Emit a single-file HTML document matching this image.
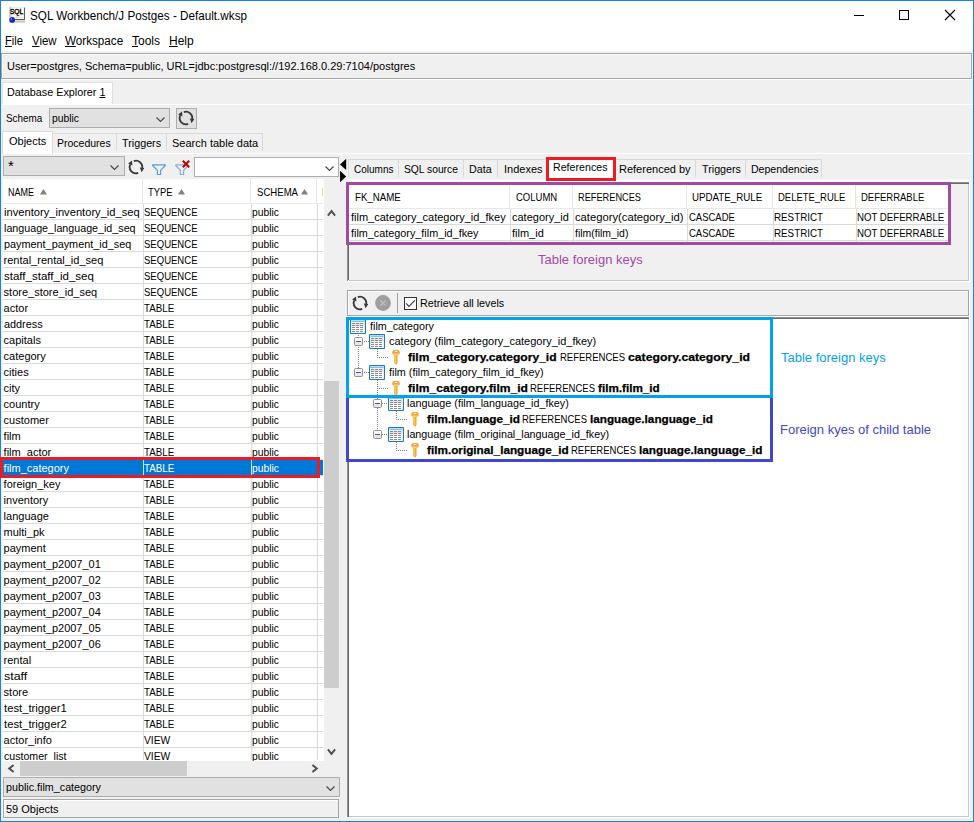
<!DOCTYPE html>
<html>
<head>
<meta charset="utf-8">
<title>SQL Workbench/J Postges - Default.wksp</title>
<style>
html,body{margin:0;padding:0;}
body{width:974px;height:822px;overflow:hidden;background:#f0f0f0;font-family:"Liberation Sans",sans-serif;font-size:11px;color:#000;position:relative;}
.a{position:absolute;}
.t{position:absolute;white-space:nowrap;font-size:11px;line-height:13px;}
.seg{font-size:12px;line-height:14px;position:absolute;white-space:nowrap;}
.ann{font-size:13px;line-height:15px;position:absolute;white-space:nowrap;}
u{text-decoration:underline;text-underline-offset:1px;}
.combo{position:absolute;box-sizing:border-box;border:1px solid #adadad;background:#e1e1e1;}
.tb{position:absolute;box-sizing:border-box;border-left:1px solid #d9d9d9;border-top:1px solid #d9d9d9;border-right:1px solid #d9d9d9;background:#f0f0f0;}
.row{position:absolute;left:0;width:320px;height:16px;border-bottom:1px solid #dadada;box-sizing:border-box;}
.row .t{top:1px;}
.sel{background:#0078d7;color:#fff;}
.vl{position:absolute;width:1px;background:#dadada;}
.hl{position:absolute;height:1px;background:#dadada;}
</style>
</head>
<body>
<div class="a" style="left:0px;top:0px;width:974px;height:822px;background:#1883d7;"></div>
<div class="a" style="left:1px;top:1px;width:972px;height:820px;background:#f0f0f0;"></div>
<div class="a" style="left:1px;top:1px;width:972px;height:50px;background:#fff;"></div>
<svg class="a" style="left:9px;top:7px" width="16" height="16" viewBox="0 0 16 16">
<rect x="0" y="0" width="16" height="16" fill="#d2d2d2"/>
<rect x="2.500" y="0.300" width="12.500" height="12" fill="#fbfbea"/>
<rect x="2.500" y="7.500" width="12.500" height="0.800" fill="#dcdccc"/>
<rect x="2.500" y="10" width="12.500" height="0.800" fill="#e4e4d4"/>
<rect x="7.300" y="7.500" width="0.800" height="5" fill="#d8d8c8"/>
<rect x="15" y="0.800" width="1" height="12.200" fill="#625c5c"/>
<rect x="6" y="12" width="10" height="1" fill="#625c5c"/>
<text x="0.700" y="6.900" font-family="Liberation Sans, sans-serif" font-size="7.200" fill="#000" stroke="#000" stroke-width="0.350" textLength="13.600" lengthAdjust="spacingAndGlyphs">SQL</text>
<circle cx="3.200" cy="12.900" r="2.800" fill="#1428c4"/><circle cx="2.500" cy="12" r="0.900" fill="#5a78ff"/>
</svg>
<div class="seg" style="left:30px;top:9px;font-size:12px;line-height:14px;transform:scaleX(0.9741);transform-origin:0 0;">SQL Workbench/J Postges - Default.wksp</div>
<svg class="a" style="left:850px;top:8px" width="110" height="14" viewBox="0 0 110 14">
<rect x="4" y="7" width="10" height="1" fill="#000"/>
<rect x="49.500" y="2.500" width="9" height="9" fill="none" stroke="#000" stroke-width="1"/>
<path d="M95 2 L105 12 M105 2 L95 12" stroke="#000" stroke-width="1.100" fill="none"/>
</svg>
<div class="seg" style="left:5px;top:34px;font-size:12px;line-height:14px;transform:scaleX(0.9300);transform-origin:0 0;"><u>F</u>ile</div>
<div class="seg" style="left:32px;top:34px;font-size:12px;line-height:14px;transform:scaleX(0.9500);transform-origin:0 0;"><u>V</u>iew</div>
<div class="seg" style="left:65px;top:34px;font-size:12px;line-height:14px;transform:scaleX(0.9730);transform-origin:0 0;"><u>W</u>orkspace</div>
<div class="seg" style="left:132px;top:34px;font-size:12px;line-height:14px;"><u>T</u>ools</div>
<div class="seg" style="left:169px;top:34px;font-size:12px;line-height:14px;"><u>H</u>elp</div>
<div class="a" style="left:1px;top:53px;width:971px;height:26px;box-sizing:border-box;border:1px solid #a5a5a5;box-shadow:inset 1px 1px 0 #fff, 1px 1px 0 #fff;"></div>
<div class="t" style="left:7px;top:60px;">User=postgres, Schema=public, URL=jdbc:postgresql://192.168.0.29:7104/postgres</div>
<div class="a" style="left:2px;top:82px;width:111px;height:22px;background:#fff;box-sizing:border-box;border:1px solid #e0e0e0;border-bottom:none;"></div>
<div class="t" style="left:7px;top:86px;transform:scaleX(0.9812);transform-origin:0 0;">Database Explorer <u>1</u></div>
<div class="a" style="left:2px;top:104px;width:970px;height:1px;background:#fff;"></div>
<div class="t" style="left:6px;top:112px;transform:scaleX(0.8994);transform-origin:0 0;">Schema</div>
<div class="combo" style="left:49px;top:108px;width:121px;height:20px"></div>
<div class="t" style="left:52px;top:112px;transform:scaleX(0.9391);transform-origin:0 0;">public</div>
<svg class="a" style="left:156px;top:117px" width="9" height="5.5" viewBox="0 0 9 5.5"><path d="M0.5 0.5 L4.5 4.5 L8.5 0.5" fill="none" stroke="#444" stroke-width="1.1"/></svg>
<div class="combo" style="left:176px;top:108px;width:21px;height:21px"></div>
<svg class="a" style="left:178px;top:110px" width="16" height="16" viewBox="0 0 16 16">
<path d="M5.85 2.08 A6.3 6.3 0 0 1 14.2 9.09" fill="none" stroke="#3a3a3a" stroke-width="1.85"/>
<path d="M10.15 13.92 A6.3 6.3 0 0 1 2.29 5.34" fill="none" stroke="#3a3a3a" stroke-width="1.85"/>
<path d="M16.400 9 L11.900 8.500 L13.500 13.300 Z" fill="#3a3a3a"/>
<path d="M0.100 4.600 L4.400 6.500 L4 1.500 Z" fill="#3a3a3a"/>
</svg>
<div class="tb" style="left:52px;top:133px;width:65px;height:18px"></div>
<div class="tb" style="left:116px;top:133px;width:51px;height:18px"></div>
<div class="tb" style="left:166px;top:133px;width:97px;height:18px"></div>
<div class="a" style="left:2px;top:153px;width:970px;height:1px;background:#fff;"></div>
<div class="tb" style="left:2px;top:131px;width:51px;height:23px;background:#fff"></div>
<div class="t" style="left:9px;top:135px;">Objects</div>
<div class="t" style="left:57px;top:137px;transform:scaleX(0.9544);transform-origin:0 0;">Procedures</div>
<div class="t" style="left:122px;top:137px;transform:scaleX(0.9790);transform-origin:0 0;">Triggers</div>
<div class="t" style="left:172px;top:137px;">Search table data</div>
<div class="combo" style="left:3px;top:156px;width:122px;height:20px"></div>
<div class="t" style="left:8px;top:156.5px;font-size:15px;line-height:17px">*</div>
<svg class="a" style="left:110px;top:165px" width="9" height="5.5" viewBox="0 0 9 5.5"><path d="M0.5 0.5 L4.5 4.5 L8.5 0.5" fill="none" stroke="#444" stroke-width="1.1"/></svg>
<svg class="a" style="left:128px;top:159px" width="16" height="16" viewBox="0 0 16 16">
<path d="M5.85 2.08 A6.3 6.3 0 0 1 14.2 9.09" fill="none" stroke="#3a3a3a" stroke-width="1.85"/>
<path d="M10.15 13.92 A6.3 6.3 0 0 1 2.29 5.34" fill="none" stroke="#3a3a3a" stroke-width="1.85"/>
<path d="M16.400 9 L11.900 8.500 L13.500 13.300 Z" fill="#3a3a3a"/>
<path d="M0.100 4.600 L4.400 6.500 L4 1.500 Z" fill="#3a3a3a"/>
</svg>
<svg class="a" style="left:152px;top:164px;opacity:1" width="14" height="12" viewBox="0 0 14 12"><path d="M0.7 0.8 H13.3 V1.500 L8.600 6.400 V10.500 H5.400 V6.400 L0.7 1.500 Z" fill="none" stroke="#5b9bd5" stroke-width="1.2" stroke-linejoin="round"/></svg>
<svg class="a" style="left:175px;top:164px;opacity:0.75" width="14" height="12" viewBox="0 0 14 12"><path d="M0.7 0.8 H13.3 V1.500 L8.600 6.400 V10.500 H5.400 V6.400 L0.7 1.500 Z" fill="none" stroke="#5b9bd5" stroke-width="1.2" stroke-linejoin="round"/></svg>
<svg class="a" style="left:182px;top:160px" width="8" height="8" viewBox="0 0 8 8"><path d="M0.8 0.8 L7.2 7.2 M7.2 0.8 L0.8 7.2" stroke="#c00000" stroke-width="2"/></svg>
<div class="combo" style="left:194px;top:157px;width:145px;height:20px;background:#fff"></div>
<svg class="a" style="left:325px;top:166px" width="9" height="5.5" viewBox="0 0 9 5.5"><path d="M0.5 0.5 L4.5 4.5 L8.5 0.5" fill="none" stroke="#444" stroke-width="1.1"/></svg>
<div class="a" style="left:3px;top:179px;width:321px;height:582px;background:#fff;overflow:hidden">
<div class="t" style="left:5px;top:7px;transform:scaleX(0.8181);transform-origin:0 0;">NAME</div>
<svg class="a" style="left:36.5px;top:10px" width="7" height="6" viewBox="0 0 7 6"><path d="M0 5.5 L3.5 0 L7 5.5 Z" fill="#808080"/></svg>
<div class="t" style="left:145.3px;top:7px;transform:scaleX(0.8492);transform-origin:0 0;">TYPE</div>
<svg class="a" style="left:175px;top:10px" width="7" height="6" viewBox="0 0 7 6"><path d="M0 5.5 L3.5 0 L7 5.5 Z" fill="#808080"/></svg>
<div class="t" style="left:253.6px;top:7px;transform:scaleX(0.8712);transform-origin:0 0;">SCHEMA</div>
<svg class="a" style="left:298px;top:10px" width="7" height="6" viewBox="0 0 7 6"><path d="M0 5.5 L3.5 0 L7 5.5 Z" fill="#808080"/></svg>
<div class="a" style="left:319px;top:9px;width:1px;height:8px;background:#f8d690;"></div>
<div class="hl" style="left:0;top:24px;width:320px;background:#e8e8e8"></div>
<div class="vl" style="left:140px;top:25px;height:556px"></div>
<div class="vl" style="left:139px;top:0;height:24px;background:#e5e5e5"></div>
<div class="vl" style="left:248px;top:25px;height:556px"></div>
<div class="vl" style="left:247px;top:0;height:24px;background:#e5e5e5"></div>
<div class="vl" style="left:314px;top:25px;height:556px"></div>
<div class="vl" style="left:313px;top:0;height:24px;background:#e5e5e5"></div>
<div class="row" style="top:25px"><div class="t" style="left:0.6px;top:2px;transform:scaleX(1.0135);transform-origin:0 0;">inventory_inventory_id_seq</div><div class="t" style="left:141.3px;top:2px;transform:scaleX(0.8664);transform-origin:0 0;">SEQUENCE</div><div class="t" style="left:249px;top:2px;transform:scaleX(0.9391);transform-origin:0 0;">public</div></div>
<div class="row" style="top:41px"><div class="t" style="left:0.6px;top:2px;transform:scaleX(0.9730);transform-origin:0 0;">language_language_id_seq</div><div class="t" style="left:141.3px;top:2px;transform:scaleX(0.8664);transform-origin:0 0;">SEQUENCE</div><div class="t" style="left:249px;top:2px;transform:scaleX(0.9391);transform-origin:0 0;">public</div></div>
<div class="row" style="top:57px"><div class="t" style="left:0.6px;top:2px;transform:scaleX(0.9860);transform-origin:0 0;">payment_payment_id_seq</div><div class="t" style="left:141.3px;top:2px;transform:scaleX(0.8664);transform-origin:0 0;">SEQUENCE</div><div class="t" style="left:249px;top:2px;transform:scaleX(0.9391);transform-origin:0 0;">public</div></div>
<div class="row" style="top:73px"><div class="t" style="left:0.6px;top:2px;">rental_rental_id_seq</div><div class="t" style="left:141.3px;top:2px;transform:scaleX(0.8664);transform-origin:0 0;">SEQUENCE</div><div class="t" style="left:249px;top:2px;transform:scaleX(0.9391);transform-origin:0 0;">public</div></div>
<div class="row" style="top:89px"><div class="t" style="left:0.6px;top:2px;transform:scaleX(1.0470);transform-origin:0 0;">staff_staff_id_seq</div><div class="t" style="left:141.3px;top:2px;transform:scaleX(0.8664);transform-origin:0 0;">SEQUENCE</div><div class="t" style="left:249px;top:2px;transform:scaleX(0.9391);transform-origin:0 0;">public</div></div>
<div class="row" style="top:105px"><div class="t" style="left:0.6px;top:2px;">store_store_id_seq</div><div class="t" style="left:141.3px;top:2px;transform:scaleX(0.8664);transform-origin:0 0;">SEQUENCE</div><div class="t" style="left:249px;top:2px;transform:scaleX(0.9391);transform-origin:0 0;">public</div></div>
<div class="row" style="top:121px"><div class="t" style="left:0.6px;top:2px;">actor</div><div class="t" style="left:141.3px;top:2px;transform:scaleX(0.8904);transform-origin:0 0;">TABLE</div><div class="t" style="left:249px;top:2px;transform:scaleX(0.9391);transform-origin:0 0;">public</div></div>
<div class="row" style="top:137px"><div class="t" style="left:0.6px;top:2px;transform:scaleX(0.9850);transform-origin:0 0;">address</div><div class="t" style="left:141.3px;top:2px;transform:scaleX(0.8904);transform-origin:0 0;">TABLE</div><div class="t" style="left:249px;top:2px;transform:scaleX(0.9391);transform-origin:0 0;">public</div></div>
<div class="row" style="top:153px"><div class="t" style="left:0.6px;top:2px;">capitals</div><div class="t" style="left:141.3px;top:2px;transform:scaleX(0.8904);transform-origin:0 0;">TABLE</div><div class="t" style="left:249px;top:2px;transform:scaleX(0.9391);transform-origin:0 0;">public</div></div>
<div class="row" style="top:169px"><div class="t" style="left:0.6px;top:2px;">category</div><div class="t" style="left:141.3px;top:2px;transform:scaleX(0.8904);transform-origin:0 0;">TABLE</div><div class="t" style="left:249px;top:2px;transform:scaleX(0.9391);transform-origin:0 0;">public</div></div>
<div class="row" style="top:185px"><div class="t" style="left:0.6px;top:2px;">cities</div><div class="t" style="left:141.3px;top:2px;transform:scaleX(0.8904);transform-origin:0 0;">TABLE</div><div class="t" style="left:249px;top:2px;transform:scaleX(0.9391);transform-origin:0 0;">public</div></div>
<div class="row" style="top:201px"><div class="t" style="left:0.6px;top:2px;">city</div><div class="t" style="left:141.3px;top:2px;transform:scaleX(0.8904);transform-origin:0 0;">TABLE</div><div class="t" style="left:249px;top:2px;transform:scaleX(0.9391);transform-origin:0 0;">public</div></div>
<div class="row" style="top:217px"><div class="t" style="left:0.6px;top:2px;">country</div><div class="t" style="left:141.3px;top:2px;transform:scaleX(0.8904);transform-origin:0 0;">TABLE</div><div class="t" style="left:249px;top:2px;transform:scaleX(0.9391);transform-origin:0 0;">public</div></div>
<div class="row" style="top:233px"><div class="t" style="left:0.6px;top:2px;">customer</div><div class="t" style="left:141.3px;top:2px;transform:scaleX(0.8904);transform-origin:0 0;">TABLE</div><div class="t" style="left:249px;top:2px;transform:scaleX(0.9391);transform-origin:0 0;">public</div></div>
<div class="row" style="top:249px"><div class="t" style="left:0.6px;top:2px;">film</div><div class="t" style="left:141.3px;top:2px;transform:scaleX(0.8904);transform-origin:0 0;">TABLE</div><div class="t" style="left:249px;top:2px;transform:scaleX(0.9391);transform-origin:0 0;">public</div></div>
<div class="row" style="top:265px"><div class="t" style="left:0.6px;top:2px;">film_actor</div><div class="t" style="left:141.3px;top:2px;transform:scaleX(0.8904);transform-origin:0 0;">TABLE</div><div class="t" style="left:249px;top:2px;transform:scaleX(0.9391);transform-origin:0 0;">public</div></div>
<div class="row sel" style="top:281px"><div class="t" style="left:0.6px;top:2px;">film_category</div><div class="t" style="left:141.3px;top:2px;transform:scaleX(0.8904);transform-origin:0 0;">TABLE</div><div class="t" style="left:249px;top:2px;transform:scaleX(0.9391);transform-origin:0 0;">public</div></div>
<div class="row" style="top:297px"><div class="t" style="left:0.6px;top:2px;">foreign_key</div><div class="t" style="left:141.3px;top:2px;transform:scaleX(0.8904);transform-origin:0 0;">TABLE</div><div class="t" style="left:249px;top:2px;transform:scaleX(0.9391);transform-origin:0 0;">public</div></div>
<div class="row" style="top:313px"><div class="t" style="left:0.6px;top:2px;">inventory</div><div class="t" style="left:141.3px;top:2px;transform:scaleX(0.8904);transform-origin:0 0;">TABLE</div><div class="t" style="left:249px;top:2px;transform:scaleX(0.9391);transform-origin:0 0;">public</div></div>
<div class="row" style="top:329px"><div class="t" style="left:0.6px;top:2px;">language</div><div class="t" style="left:141.3px;top:2px;transform:scaleX(0.8904);transform-origin:0 0;">TABLE</div><div class="t" style="left:249px;top:2px;transform:scaleX(0.9391);transform-origin:0 0;">public</div></div>
<div class="row" style="top:345px"><div class="t" style="left:0.6px;top:2px;">multi_pk</div><div class="t" style="left:141.3px;top:2px;transform:scaleX(0.8904);transform-origin:0 0;">TABLE</div><div class="t" style="left:249px;top:2px;transform:scaleX(0.9391);transform-origin:0 0;">public</div></div>
<div class="row" style="top:361px"><div class="t" style="left:0.6px;top:2px;">payment</div><div class="t" style="left:141.3px;top:2px;transform:scaleX(0.8904);transform-origin:0 0;">TABLE</div><div class="t" style="left:249px;top:2px;transform:scaleX(0.9391);transform-origin:0 0;">public</div></div>
<div class="row" style="top:377px"><div class="t" style="left:0.6px;top:2px;">payment_p2007_01</div><div class="t" style="left:141.3px;top:2px;transform:scaleX(0.8904);transform-origin:0 0;">TABLE</div><div class="t" style="left:249px;top:2px;transform:scaleX(0.9391);transform-origin:0 0;">public</div></div>
<div class="row" style="top:393px"><div class="t" style="left:0.6px;top:2px;">payment_p2007_02</div><div class="t" style="left:141.3px;top:2px;transform:scaleX(0.8904);transform-origin:0 0;">TABLE</div><div class="t" style="left:249px;top:2px;transform:scaleX(0.9391);transform-origin:0 0;">public</div></div>
<div class="row" style="top:409px"><div class="t" style="left:0.6px;top:2px;">payment_p2007_03</div><div class="t" style="left:141.3px;top:2px;transform:scaleX(0.8904);transform-origin:0 0;">TABLE</div><div class="t" style="left:249px;top:2px;transform:scaleX(0.9391);transform-origin:0 0;">public</div></div>
<div class="row" style="top:425px"><div class="t" style="left:0.6px;top:2px;">payment_p2007_04</div><div class="t" style="left:141.3px;top:2px;transform:scaleX(0.8904);transform-origin:0 0;">TABLE</div><div class="t" style="left:249px;top:2px;transform:scaleX(0.9391);transform-origin:0 0;">public</div></div>
<div class="row" style="top:441px"><div class="t" style="left:0.6px;top:2px;">payment_p2007_05</div><div class="t" style="left:141.3px;top:2px;transform:scaleX(0.8904);transform-origin:0 0;">TABLE</div><div class="t" style="left:249px;top:2px;transform:scaleX(0.9391);transform-origin:0 0;">public</div></div>
<div class="row" style="top:457px"><div class="t" style="left:0.6px;top:2px;">payment_p2007_06</div><div class="t" style="left:141.3px;top:2px;transform:scaleX(0.8904);transform-origin:0 0;">TABLE</div><div class="t" style="left:249px;top:2px;transform:scaleX(0.9391);transform-origin:0 0;">public</div></div>
<div class="row" style="top:473px"><div class="t" style="left:0.6px;top:2px;">rental</div><div class="t" style="left:141.3px;top:2px;transform:scaleX(0.8904);transform-origin:0 0;">TABLE</div><div class="t" style="left:249px;top:2px;transform:scaleX(0.9391);transform-origin:0 0;">public</div></div>
<div class="row" style="top:489px"><div class="t" style="left:0.6px;top:2px;transform:scaleX(1.1300);transform-origin:0 0;">staff</div><div class="t" style="left:141.3px;top:2px;transform:scaleX(0.8904);transform-origin:0 0;">TABLE</div><div class="t" style="left:249px;top:2px;transform:scaleX(0.9391);transform-origin:0 0;">public</div></div>
<div class="row" style="top:505px"><div class="t" style="left:0.6px;top:2px;">store</div><div class="t" style="left:141.3px;top:2px;transform:scaleX(0.8904);transform-origin:0 0;">TABLE</div><div class="t" style="left:249px;top:2px;transform:scaleX(0.9391);transform-origin:0 0;">public</div></div>
<div class="row" style="top:521px"><div class="t" style="left:0.6px;top:2px;transform:scaleX(1.0250);transform-origin:0 0;">test_trigger1</div><div class="t" style="left:141.3px;top:2px;transform:scaleX(0.8904);transform-origin:0 0;">TABLE</div><div class="t" style="left:249px;top:2px;transform:scaleX(0.9391);transform-origin:0 0;">public</div></div>
<div class="row" style="top:537px"><div class="t" style="left:0.6px;top:2px;transform:scaleX(1.0250);transform-origin:0 0;">test_trigger2</div><div class="t" style="left:141.3px;top:2px;transform:scaleX(0.8904);transform-origin:0 0;">TABLE</div><div class="t" style="left:249px;top:2px;transform:scaleX(0.9391);transform-origin:0 0;">public</div></div>
<div class="row" style="top:553px"><div class="t" style="left:0.6px;top:2px;">actor_info</div><div class="t" style="left:141.3px;top:2px;transform:scaleX(0.9351);transform-origin:0 0;">VIEW</div><div class="t" style="left:249px;top:2px;transform:scaleX(0.9391);transform-origin:0 0;">public</div></div>
<div class="row" style="top:569px"><div class="t" style="left:0.6px;top:2px;transform:scaleX(0.9650);transform-origin:0 0;">customer_list</div><div class="t" style="left:141.3px;top:2px;transform:scaleX(0.9351);transform-origin:0 0;">VIEW</div><div class="t" style="left:249px;top:2px;transform:scaleX(0.9391);transform-origin:0 0;">public</div></div>
</div>
<div class="a" style="left:143px;top:460px;width:1px;height:15px;background:#cfe3f5;"></div>
<div class="a" style="left:251px;top:460px;width:1px;height:15px;background:#cfe3f5;"></div>
<div class="a" style="left:0px;top:457px;width:320px;height:21px;box-sizing:border-box;border:3px solid #ed1c24;"></div>
<div class="a" style="left:324px;top:204px;width:16px;height:557px;background:#f0f0f0;"></div>
<div class="a" style="left:324px;top:381px;width:15px;height:307px;background:#cdcdcd;"></div>
<svg class="a" style="left:327px;top:209px" width="9" height="8" viewBox="0 0 9 8"><path d="M0.900 6.600 L4.500 2.200 L8.100 6.600" fill="none" stroke="#505050" stroke-width="2"/></svg>
<svg class="a" style="left:327px;top:748px" width="9" height="8" viewBox="0 0 9 8"><path d="M0.900 1.400 L4.500 5.800 L8.100 1.400" fill="none" stroke="#505050" stroke-width="2"/></svg>
<div class="a" style="left:3px;top:761px;width:337px;height:16px;background:#f0f0f0;"></div>
<div class="a" style="left:20px;top:761px;width:167px;height:15px;background:#cdcdcd;"></div>
<svg class="a" style="left:7px;top:764px" width="8" height="9" viewBox="0 0 8 9"><path d="M6.600 0.900 L2.200 4.500 L6.600 8.100" fill="none" stroke="#505050" stroke-width="2"/></svg>
<svg class="a" style="left:311px;top:764px" width="8" height="9" viewBox="0 0 8 9"><path d="M1.400 0.900 L5.800 4.500 L1.400 8.100" fill="none" stroke="#505050" stroke-width="2"/></svg>
<div class="combo" style="left:3px;top:777px;width:337px;height:20px"></div>
<div class="t" style="left:6px;top:781px;transform:scaleX(0.9772);transform-origin:0 0;">public.film_category</div>
<svg class="a" style="left:326px;top:786px" width="9" height="5.5" viewBox="0 0 9 5.5"><path d="M0.5 0.5 L4.5 4.5 L8.5 0.5" fill="none" stroke="#444" stroke-width="1.1"/></svg>
<div class="a" style="left:3px;top:799px;width:336px;height:19px;box-sizing:border-box;border:1px solid #a5a5a5;box-shadow:inset 1px 1px 0 #fff;"></div>
<div class="t" style="left:6px;top:803px;">59 Objects</div>
<svg class="a" style="left:340px;top:158px" width="7" height="25" viewBox="0 0 7 25"><path d="M6.200 0.800 V12 L0 6.400 Z" fill="#000"/><path d="M0 12.800 V24.200 L6.200 18.500 Z" fill="#000"/></svg>
<div class="tb" style="left:348px;top:159px;width:51px;height:18px"></div>
<div class="t" style="left:354px;top:163px;transform:scaleX(0.9100);transform-origin:0 0;">Columns</div>
<div class="tb" style="left:398px;top:159px;width:66px;height:18px"></div>
<div class="t" style="left:404px;top:163px;transform:scaleX(0.9343);transform-origin:0 0;">SQL source</div>
<div class="tb" style="left:463px;top:159px;width:35px;height:18px"></div>
<div class="t" style="left:469px;top:163px;transform:scaleX(0.9720);transform-origin:0 0;">Data</div>
<div class="tb" style="left:497px;top:159px;width:51px;height:18px"></div>
<div class="t" style="left:504px;top:163px;">Indexes</div>
<div class="tb" style="left:614px;top:159px;width:82px;height:18px"></div>
<div class="t" style="left:619px;top:163px;">Referenced by</div>
<div class="tb" style="left:695px;top:159px;width:51px;height:18px"></div>
<div class="t" style="left:702px;top:163px;transform:scaleX(0.9765);transform-origin:0 0;">Triggers</div>
<div class="tb" style="left:745px;top:159px;width:77px;height:18px"></div>
<div class="t" style="left:751px;top:163px;transform:scaleX(0.9596);transform-origin:0 0;">Dependencies</div>
<div class="a" style="left:348px;top:179px;width:622px;height:1px;background:#f8f8f8;"></div>
<div class="a" style="left:348px;top:180px;width:622px;height:2px;background:#fdfdfd;"></div>
<div class="a" style="left:347px;top:182px;width:623px;height:99px;background:#f0f0f0;"></div>
<div class="a" style="left:347px;top:182px;width:623px;height:1px;background:#909090;"></div>
<div class="a" style="left:347px;top:183px;width:622px;height:1px;background:#696969;"></div>
<div class="a" style="left:347px;top:182px;width:1px;height:99px;background:#909090;"></div>
<div class="a" style="left:348px;top:183px;width:1px;height:97px;background:#696969;"></div>
<div class="a" style="left:968px;top:184px;width:1px;height:97px;background:#c6c6c6;"></div>
<div class="a" style="left:349px;top:280px;width:620px;height:1px;background:#c6c6c6;"></div>
<div class="a" style="left:969px;top:182px;width:1px;height:100px;background:#fff;"></div>
<div class="a" style="left:347px;top:281px;width:623px;height:1px;background:#fff;"></div>
<div class="a" style="left:349px;top:185px;width:599px;height:57px;background:#fff;"></div>
<div class="t" style="left:355px;top:191px;transform:scaleX(0.8813);transform-origin:0 0;">FK_NAME</div>
<div class="t" style="left:516px;top:191px;transform:scaleX(0.8642);transform-origin:0 0;">COLUMN</div>
<div class="t" style="left:578px;top:191px;transform:scaleX(0.8379);transform-origin:0 0;">REFERENCES</div>
<div class="t" style="left:692px;top:191px;transform:scaleX(0.8856);transform-origin:0 0;">UPDATE_RULE</div>
<div class="t" style="left:778px;top:191px;transform:scaleX(0.8599);transform-origin:0 0;">DELETE_RULE</div>
<div class="t" style="left:861px;top:191px;transform:scaleX(0.8629);transform-origin:0 0;">DEFERRABLE</div>
<div class="a" style="left:510px;top:209px;width:1px;height:33px;background:#dadada;"></div>
<div class="a" style="left:509px;top:185px;width:1px;height:23px;background:#e5e5e5;"></div>
<div class="a" style="left:573px;top:209px;width:1px;height:33px;background:#dadada;"></div>
<div class="a" style="left:572px;top:185px;width:1px;height:23px;background:#e5e5e5;"></div>
<div class="a" style="left:687px;top:209px;width:1px;height:33px;background:#dadada;"></div>
<div class="a" style="left:686px;top:185px;width:1px;height:23px;background:#e5e5e5;"></div>
<div class="a" style="left:773px;top:209px;width:1px;height:33px;background:#dadada;"></div>
<div class="a" style="left:772px;top:185px;width:1px;height:23px;background:#e5e5e5;"></div>
<div class="a" style="left:856px;top:209px;width:1px;height:33px;background:#dadada;"></div>
<div class="a" style="left:855px;top:185px;width:1px;height:23px;background:#e5e5e5;"></div>
<div class="a" style="left:349px;top:208px;width:599px;height:1px;background:#e8e8e8;"></div>
<div class="a" style="left:349px;top:224px;width:599px;height:1px;background:#dadada;"></div>
<div class="a" style="left:349px;top:240px;width:599px;height:1px;background:#dadada;"></div>
<div class="t" style="left:351px;top:211px;">film_category_category_id_fkey</div>
<div class="t" style="left:512px;top:211px;">category_id</div>
<div class="t" style="left:575px;top:211px;transform:scaleX(1.0208);transform-origin:0 0;">category(category_id)</div>
<div class="t" style="left:689px;top:211px;transform:scaleX(0.8611);transform-origin:0 0;">CASCADE</div>
<div class="t" style="left:774px;top:211px;transform:scaleX(0.8909);transform-origin:0 0;">RESTRICT</div>
<div class="t" style="left:857px;top:211px;transform:scaleX(0.8769);transform-origin:0 0;">NOT DEFERRABLE</div>
<div class="t" style="left:351px;top:227px;transform:scaleX(0.9836);transform-origin:0 0;">film_category_film_id_fkey</div>
<div class="t" style="left:512px;top:227px;">film_id</div>
<div class="t" style="left:575px;top:227px;transform:scaleX(0.9496);transform-origin:0 0;">film(film_id)</div>
<div class="t" style="left:689px;top:227px;transform:scaleX(0.8611);transform-origin:0 0;">CASCADE</div>
<div class="t" style="left:774px;top:227px;transform:scaleX(0.8909);transform-origin:0 0;">RESTRICT</div>
<div class="t" style="left:857px;top:227px;transform:scaleX(0.8769);transform-origin:0 0;">NOT DEFERRABLE</div>
<div class="a" style="left:549px;top:158px;width:65px;height:24px;background:#fff;"></div>
<div class="t" style="left:553px;top:161px;transform:scaleX(0.9686);transform-origin:0 0;">References</div>
<div class="a" style="left:546px;top:157px;width:70px;height:24px;box-sizing:border-box;border:3px solid #ed1c24;"></div>
<div class="a" style="left:346px;top:182px;width:605px;height:63px;box-sizing:border-box;border:3px solid #a349a4;"></div>
<div class="ann" style="left:538px;top:252px;font-size:13px;line-height:15px;color:#a349a4;">Table foreign keys</div>
<div class="a" style="left:347px;top:290px;width:622px;height:26px;box-sizing:border-box;border:1px solid #a5a5a5;box-shadow:inset 1px 1px 0 #fff, 1px 1px 0 #fff;"></div>
<svg class="a" style="left:352px;top:295px" width="16" height="16" viewBox="0 0 16 16">
<path d="M5.85 2.08 A6.3 6.3 0 0 1 14.2 9.09" fill="none" stroke="#3a3a3a" stroke-width="1.85"/>
<path d="M10.15 13.92 A6.3 6.3 0 0 1 2.29 5.34" fill="none" stroke="#3a3a3a" stroke-width="1.85"/>
<path d="M16.400 9 L11.900 8.500 L13.500 13.300 Z" fill="#3a3a3a"/>
<path d="M0.100 4.600 L4.400 6.500 L4 1.500 Z" fill="#3a3a3a"/>
</svg>
<svg class="a" style="left:375px;top:295px" width="16" height="16" viewBox="0 0 16 16"><circle cx="8" cy="8" r="7.900" fill="#9e9e9e"/><path d="M5.200 5.200 L10.800 10.800 M10.800 5.200 L5.200 10.800" stroke="#bcbcbc" stroke-width="1.500"/></svg>
<div class="a" style="left:397px;top:293px;width:1px;height:20px;background:#a0a0a0;"></div>
<div class="a" style="left:404px;top:297px;width:13px;height:13px;background:#fff;box-sizing:border-box;border:1px solid #333;"></div>
<svg class="a" style="left:404px;top:297px" width="13" height="13" viewBox="0 0 13 13"><path d="M2.200 6.400 L4.900 9.400 L10.900 3.300" fill="none" stroke="#3a3a3a" stroke-width="1.100"/></svg>
<div class="t" style="left:420px;top:297px;transform:scaleX(0.9768);transform-origin:0 0;">Retrieve all levels</div>
<div class="a" style="left:347px;top:317px;width:623px;height:501px;background:#fff;"></div>
<div class="a" style="left:347px;top:317px;width:623px;height:1px;background:#909090;"></div>
<div class="a" style="left:347px;top:318px;width:622px;height:1px;background:#696969;"></div>
<div class="a" style="left:347px;top:317px;width:1px;height:501px;background:#909090;"></div>
<div class="a" style="left:348px;top:318px;width:1px;height:499px;background:#696969;"></div>
<div class="a" style="left:968px;top:319px;width:1px;height:498px;background:#c6c6c6;"></div>
<div class="a" style="left:349px;top:816px;width:620px;height:1px;background:#c6c6c6;"></div>
<div class="a" style="left:969px;top:317px;width:1px;height:501px;background:#fff;"></div>
<div class="a" style="left:347px;top:817px;width:623px;height:1px;background:#fff;"></div>
<svg class="a" style="left:350px;top:319px" width="16" height="15" viewBox="0 0 16 15"><rect x="0.5" y="0.5" width="15" height="14" rx="1" fill="#fff" stroke="#1c7cb8" stroke-width="1.2"/><rect x="1.5" y="1.5" width="13" height="1.5" fill="#7fbfe8"/><rect x="1.5" y="3.5" width="13" height="4" fill="#e4e4e4"/><rect x="2" y="4" width="3" height="1" fill="#8a8a8a"/><rect x="6" y="4" width="3" height="1" fill="#8a8a8a"/><rect x="10" y="4" width="3" height="1" fill="#8a8a8a"/><rect x="2" y="6" width="3" height="1" fill="#8a8a8a"/><rect x="6" y="6" width="3" height="1" fill="#8a8a8a"/><rect x="10" y="6" width="3" height="1" fill="#8a8a8a"/><rect x="2" y="8" width="3" height="1" fill="#8a8a8a"/><rect x="6" y="8" width="3" height="1" fill="#8a8a8a"/><rect x="10" y="8" width="3" height="1" fill="#8a8a8a"/><rect x="2" y="10" width="3" height="1" fill="#8a8a8a"/><rect x="6" y="10" width="3" height="1" fill="#8a8a8a"/><rect x="10" y="10" width="3" height="1" fill="#8a8a8a"/><rect x="2" y="12" width="3" height="1" fill="#8a8a8a"/><rect x="6" y="12" width="3" height="1" fill="#8a8a8a"/><rect x="10" y="12" width="3" height="1" fill="#8a8a8a"/></svg>
<div class="t" style="left:370px;top:319.5px;transform:scaleX(0.9783);transform-origin:0 0;">film_category</div>
<div class="a" style="left:358px;top:335px;height:38px;width:1px;background:repeating-linear-gradient(180deg,#808080 0 1px,transparent 1px 2px)"></div>
<div class="a" style="left:364px;top:341px;width:5px;height:1px;background:repeating-linear-gradient(90deg,#808080 0 1px,transparent 1px 2px)"></div>
<svg class="a" style="left:354px;top:337px" width="9" height="9" viewBox="0 0 9 9"><rect x="0.5" y="0.5" width="8" height="8" rx="1" fill="#fafafa" stroke="#919191"/><rect x="1" y="5" width="7" height="3" fill="#e6e6e6"/><rect x="2" y="4" width="5" height="1" fill="#3d55b5"/></svg>
<svg class="a" style="left:369px;top:334px" width="16" height="15" viewBox="0 0 16 15"><rect x="0.5" y="0.5" width="15" height="14" rx="1" fill="#fff" stroke="#1c7cb8" stroke-width="1.2"/><rect x="1.5" y="1.5" width="13" height="1.5" fill="#7fbfe8"/><rect x="1.5" y="3.5" width="13" height="4" fill="#e4e4e4"/><rect x="2" y="4" width="3" height="1" fill="#8a8a8a"/><rect x="6" y="4" width="3" height="1" fill="#8a8a8a"/><rect x="10" y="4" width="3" height="1" fill="#8a8a8a"/><rect x="2" y="6" width="3" height="1" fill="#8a8a8a"/><rect x="6" y="6" width="3" height="1" fill="#8a8a8a"/><rect x="10" y="6" width="3" height="1" fill="#8a8a8a"/><rect x="2" y="8" width="3" height="1" fill="#8a8a8a"/><rect x="6" y="8" width="3" height="1" fill="#8a8a8a"/><rect x="10" y="8" width="3" height="1" fill="#8a8a8a"/><rect x="2" y="10" width="3" height="1" fill="#8a8a8a"/><rect x="6" y="10" width="3" height="1" fill="#8a8a8a"/><rect x="10" y="10" width="3" height="1" fill="#8a8a8a"/><rect x="2" y="12" width="3" height="1" fill="#8a8a8a"/><rect x="6" y="12" width="3" height="1" fill="#8a8a8a"/><rect x="10" y="12" width="3" height="1" fill="#8a8a8a"/></svg>
<div class="t" style="left:389px;top:335px;">category (film_category_category_id_fkey)</div>
<div class="a" style="left:364px;top:372px;width:5px;height:1px;background:repeating-linear-gradient(90deg,#808080 0 1px,transparent 1px 2px)"></div>
<svg class="a" style="left:354px;top:368px" width="9" height="9" viewBox="0 0 9 9"><rect x="0.5" y="0.5" width="8" height="8" rx="1" fill="#fafafa" stroke="#919191"/><rect x="1" y="5" width="7" height="3" fill="#e6e6e6"/><rect x="2" y="4" width="5" height="1" fill="#3d55b5"/></svg>
<svg class="a" style="left:369px;top:365px" width="16" height="15" viewBox="0 0 16 15"><rect x="0.5" y="0.5" width="15" height="14" rx="1" fill="#fff" stroke="#1c7cb8" stroke-width="1.2"/><rect x="1.5" y="1.5" width="13" height="1.5" fill="#7fbfe8"/><rect x="1.5" y="3.5" width="13" height="4" fill="#e4e4e4"/><rect x="2" y="4" width="3" height="1" fill="#8a8a8a"/><rect x="6" y="4" width="3" height="1" fill="#8a8a8a"/><rect x="10" y="4" width="3" height="1" fill="#8a8a8a"/><rect x="2" y="6" width="3" height="1" fill="#8a8a8a"/><rect x="6" y="6" width="3" height="1" fill="#8a8a8a"/><rect x="10" y="6" width="3" height="1" fill="#8a8a8a"/><rect x="2" y="8" width="3" height="1" fill="#8a8a8a"/><rect x="6" y="8" width="3" height="1" fill="#8a8a8a"/><rect x="10" y="8" width="3" height="1" fill="#8a8a8a"/><rect x="2" y="10" width="3" height="1" fill="#8a8a8a"/><rect x="6" y="10" width="3" height="1" fill="#8a8a8a"/><rect x="10" y="10" width="3" height="1" fill="#8a8a8a"/><rect x="2" y="12" width="3" height="1" fill="#8a8a8a"/><rect x="6" y="12" width="3" height="1" fill="#8a8a8a"/><rect x="10" y="12" width="3" height="1" fill="#8a8a8a"/></svg>
<div class="t" style="left:389px;top:366px;transform:scaleX(0.9840);transform-origin:0 0;">film (film_category_film_id_fkey)</div>
<div class="a" style="left:377px;top:349px;height:9px;width:1px;background:repeating-linear-gradient(180deg,#808080 0 1px,transparent 1px 2px)"></div><div class="a" style="left:377px;top:357px;width:11px;height:1px;background:repeating-linear-gradient(90deg,#808080 0 1px,transparent 1px 2px)"></div><svg class="a" style="left:392px;top:350px" width="8" height="16" viewBox="0 0 8 16">
<ellipse cx="4" cy="2.500" rx="3.800" ry="2.900" fill="#f3a536"/>
<rect x="2.500" y="1" width="3" height="1" rx="0.500" fill="#fff3d6"/>
<rect x="1.200" y="3.700" width="5.600" height="1" fill="#ffe3a3"/>
<path d="M2.300 5 H5.500 V13 L4.200 14.800 L2.300 13 Z" fill="#f0a024"/>
<rect x="3.200" y="5.200" width="1" height="8.200" fill="#ffd766"/>
</svg><div class="t" style="left:408px;top:351px;font-weight:bold;transform:scaleX(1.0958);transform-origin:0 0;-webkit-text-stroke:0.25px #000;">film_category.category_id</div><div class="t" style="left:560px;top:351px;transform:scaleX(0.8645);transform-origin:0 0;">REFERENCES</div><div class="t" style="left:628px;top:351px;font-weight:bold;transform:scaleX(1.1107);transform-origin:0 0;-webkit-text-stroke:0.25px #000;">category.category_id</div>
<div class="a" style="left:377px;top:380px;height:16px;width:1px;background:repeating-linear-gradient(180deg,#808080 0 1px,transparent 1px 2px)"></div><div class="a" style="left:377px;top:388px;width:11px;height:1px;background:repeating-linear-gradient(90deg,#808080 0 1px,transparent 1px 2px)"></div><svg class="a" style="left:392px;top:381px" width="8" height="16" viewBox="0 0 8 16">
<ellipse cx="4" cy="2.500" rx="3.800" ry="2.900" fill="#f3a536"/>
<rect x="2.500" y="1" width="3" height="1" rx="0.500" fill="#fff3d6"/>
<rect x="1.200" y="3.700" width="5.600" height="1" fill="#ffe3a3"/>
<path d="M2.300 5 H5.500 V13 L4.200 14.800 L2.300 13 Z" fill="#f0a024"/>
<rect x="3.200" y="5.200" width="1" height="8.200" fill="#ffd766"/>
</svg><div class="t" style="left:408px;top:382px;font-weight:bold;transform:scaleX(1.0987);transform-origin:0 0;-webkit-text-stroke:0.25px #000;">film_category.film_id</div><div class="t" style="left:530px;top:382px;transform:scaleX(0.8645);transform-origin:0 0;">REFERENCES</div><div class="t" style="left:598px;top:382px;font-weight:bold;transform:scaleX(1.0626);transform-origin:0 0;-webkit-text-stroke:0.25px #000;">film.film_id</div>
<div class="a" style="left:377px;top:396px;height:40px;width:1px;background:repeating-linear-gradient(180deg,#808080 0 1px,transparent 1px 2px)"></div>
<div class="a" style="left:382px;top:403px;width:5px;height:1px;background:repeating-linear-gradient(90deg,#808080 0 1px,transparent 1px 2px)"></div>
<svg class="a" style="left:373px;top:399px" width="9" height="9" viewBox="0 0 9 9"><rect x="0.5" y="0.5" width="8" height="8" rx="1" fill="#fafafa" stroke="#919191"/><rect x="1" y="5" width="7" height="3" fill="#e6e6e6"/><rect x="2" y="4" width="5" height="1" fill="#3d55b5"/></svg>
<svg class="a" style="left:388px;top:396px" width="16" height="15" viewBox="0 0 16 15"><rect x="0.5" y="0.5" width="15" height="14" rx="1" fill="#fff" stroke="#1c7cb8" stroke-width="1.2"/><rect x="1.5" y="1.5" width="13" height="1.5" fill="#7fbfe8"/><rect x="1.5" y="3.5" width="13" height="4" fill="#e4e4e4"/><rect x="2" y="4" width="3" height="1" fill="#8a8a8a"/><rect x="6" y="4" width="3" height="1" fill="#8a8a8a"/><rect x="10" y="4" width="3" height="1" fill="#8a8a8a"/><rect x="2" y="6" width="3" height="1" fill="#8a8a8a"/><rect x="6" y="6" width="3" height="1" fill="#8a8a8a"/><rect x="10" y="6" width="3" height="1" fill="#8a8a8a"/><rect x="2" y="8" width="3" height="1" fill="#8a8a8a"/><rect x="6" y="8" width="3" height="1" fill="#8a8a8a"/><rect x="10" y="8" width="3" height="1" fill="#8a8a8a"/><rect x="2" y="10" width="3" height="1" fill="#8a8a8a"/><rect x="6" y="10" width="3" height="1" fill="#8a8a8a"/><rect x="10" y="10" width="3" height="1" fill="#8a8a8a"/><rect x="2" y="12" width="3" height="1" fill="#8a8a8a"/><rect x="6" y="12" width="3" height="1" fill="#8a8a8a"/><rect x="10" y="12" width="3" height="1" fill="#8a8a8a"/></svg>
<div class="t" style="left:407.4px;top:397px;transform:scaleX(0.9799);transform-origin:0 0;">language (film_language_id_fkey)</div>
<div class="a" style="left:382px;top:434px;width:5px;height:1px;background:repeating-linear-gradient(90deg,#808080 0 1px,transparent 1px 2px)"></div>
<svg class="a" style="left:373px;top:430px" width="9" height="9" viewBox="0 0 9 9"><rect x="0.5" y="0.5" width="8" height="8" rx="1" fill="#fafafa" stroke="#919191"/><rect x="1" y="5" width="7" height="3" fill="#e6e6e6"/><rect x="2" y="4" width="5" height="1" fill="#3d55b5"/></svg>
<svg class="a" style="left:388px;top:427px" width="16" height="15" viewBox="0 0 16 15"><rect x="0.5" y="0.5" width="15" height="14" rx="1" fill="#fff" stroke="#1c7cb8" stroke-width="1.2"/><rect x="1.5" y="1.5" width="13" height="1.5" fill="#7fbfe8"/><rect x="1.5" y="3.5" width="13" height="4" fill="#e4e4e4"/><rect x="2" y="4" width="3" height="1" fill="#8a8a8a"/><rect x="6" y="4" width="3" height="1" fill="#8a8a8a"/><rect x="10" y="4" width="3" height="1" fill="#8a8a8a"/><rect x="2" y="6" width="3" height="1" fill="#8a8a8a"/><rect x="6" y="6" width="3" height="1" fill="#8a8a8a"/><rect x="10" y="6" width="3" height="1" fill="#8a8a8a"/><rect x="2" y="8" width="3" height="1" fill="#8a8a8a"/><rect x="6" y="8" width="3" height="1" fill="#8a8a8a"/><rect x="10" y="8" width="3" height="1" fill="#8a8a8a"/><rect x="2" y="10" width="3" height="1" fill="#8a8a8a"/><rect x="6" y="10" width="3" height="1" fill="#8a8a8a"/><rect x="10" y="10" width="3" height="1" fill="#8a8a8a"/><rect x="2" y="12" width="3" height="1" fill="#8a8a8a"/><rect x="6" y="12" width="3" height="1" fill="#8a8a8a"/><rect x="10" y="12" width="3" height="1" fill="#8a8a8a"/></svg>
<div class="t" style="left:407.4px;top:428px;transform:scaleX(0.9782);transform-origin:0 0;">language (film_original_language_id_fkey)</div>
<div class="a" style="left:396px;top:411px;height:9px;width:1px;background:repeating-linear-gradient(180deg,#808080 0 1px,transparent 1px 2px)"></div><div class="a" style="left:396px;top:419px;width:11px;height:1px;background:repeating-linear-gradient(90deg,#808080 0 1px,transparent 1px 2px)"></div><svg class="a" style="left:411px;top:412px" width="8" height="16" viewBox="0 0 8 16">
<ellipse cx="4" cy="2.500" rx="3.800" ry="2.900" fill="#f3a536"/>
<rect x="2.500" y="1" width="3" height="1" rx="0.500" fill="#fff3d6"/>
<rect x="1.200" y="3.700" width="5.600" height="1" fill="#ffe3a3"/>
<path d="M2.300 5 H5.500 V13 L4.200 14.800 L2.300 13 Z" fill="#f0a024"/>
<rect x="3.200" y="5.200" width="1" height="8.200" fill="#ffd766"/>
</svg><div class="t" style="left:427px;top:413px;font-weight:bold;transform:scaleX(1.0715);transform-origin:0 0;-webkit-text-stroke:0.25px #000;">film.language_id</div><div class="t" style="left:522px;top:413px;transform:scaleX(0.8645);transform-origin:0 0;">REFERENCES</div><div class="t" style="left:590px;top:413px;font-weight:bold;transform:scaleX(1.0638);transform-origin:0 0;-webkit-text-stroke:0.25px #000;">language.language_id</div>
<div class="a" style="left:396px;top:442px;height:9px;width:1px;background:repeating-linear-gradient(180deg,#808080 0 1px,transparent 1px 2px)"></div><div class="a" style="left:396px;top:450px;width:11px;height:1px;background:repeating-linear-gradient(90deg,#808080 0 1px,transparent 1px 2px)"></div><svg class="a" style="left:411px;top:443px" width="8" height="16" viewBox="0 0 8 16">
<ellipse cx="4" cy="2.500" rx="3.800" ry="2.900" fill="#f3a536"/>
<rect x="2.500" y="1" width="3" height="1" rx="0.500" fill="#fff3d6"/>
<rect x="1.200" y="3.700" width="5.600" height="1" fill="#ffe3a3"/>
<path d="M2.300 5 H5.500 V13 L4.200 14.800 L2.300 13 Z" fill="#f0a024"/>
<rect x="3.200" y="5.200" width="1" height="8.200" fill="#ffd766"/>
</svg><div class="t" style="left:427px;top:444px;font-weight:bold;transform:scaleX(1.0683);transform-origin:0 0;-webkit-text-stroke:0.25px #000;">film.original_language_id</div><div class="t" style="left:570.5px;top:444px;transform:scaleX(0.8645);transform-origin:0 0;">REFERENCES</div><div class="t" style="left:639px;top:444px;font-weight:bold;transform:scaleX(1.0681);transform-origin:0 0;-webkit-text-stroke:0.25px #000;">language.language_id</div>
<div class="a" style="left:346px;top:395px;width:427px;height:67px;box-sizing:border-box;border:3px solid #3f48cc;"></div>
<div class="a" style="left:346px;top:317px;width:427px;height:81px;box-sizing:border-box;border:3px solid #00a2e8;"></div>
<div class="ann" style="left:781px;top:350px;font-size:13px;line-height:15px;color:#00a2e8;">Table foreign keys</div>
<div class="ann" style="left:780px;top:422px;font-size:13px;line-height:15px;color:#3f48cc;">Foreign kyes of child table</div>
</body>
</html>
